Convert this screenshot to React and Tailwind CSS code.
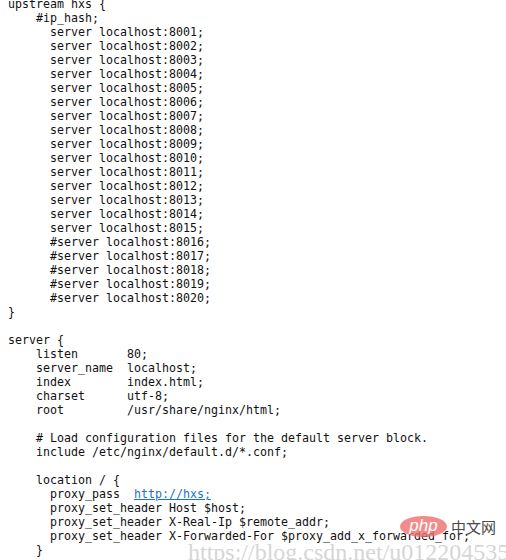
const servers = []
for (let i = 1; i <= 15; i++) servers.push(`      server localhost:80${String(i).padStart(2, "0")};`)
const disabled = []
for (let i = 16; i <= 20; i++) disabled.push(`      #server localhost:80${i};`)

const lines = [
    "upstream hxs {",
    "    #ip_hash;",
    ...servers,
    ...disabled,
    "}",
    "",
    "server {",
    "    listen       80;",
    "    server_name  localhost;",
    "    index        index.html;",
    "    charset      utf-8;",
    "    root         /usr/share/nginx/html;",
    "",
    "    # Load configuration files for the default server block.",
    "    include /etc/nginx/default.d/*.conf;",
    "",
    "    location / {",
    "LINK",
    "      proxy_set_header Host $host;",
    "      proxy_set_header X-Real-Ip $remote_addr;",
    "      proxy_set_header X-Forwarded-For $proxy_add_x_forwarded_for;",
    "    }",
]

const App = () => {
    return (
        <div className="relative w-[506px] h-[560px] overflow-hidden bg-white">
            <pre className="-mt-[3px] pl-2 text-[11.63px] leading-[14px] text-[#111] font-['DejaVu_Sans_Mono',monospace]">
                {lines.map((line, i) =>
                    line === "LINK" ? (
                        <div key={i}>
                            {"      proxy_pass  "}
                            <span className="text-[#1a6fd6] underline">http://hxs;</span>
                        </div>
                    ) : (
                        <div key={i}>{line || " "}</div>
                    )
                )}
            </pre>

            {/* php 中文网 watermark */}
            <div className="absolute left-[400px] top-[516px] flex items-center gap-[4px]">
                <div className="w-[47px] h-[21px] rounded-[50%] bg-[#ef6f6f]/80 flex items-center justify-center">
                    <span className="text-white italic text-[17px] leading-none font-['Liberation_Sans',sans-serif] -mt-[3px]">php</span>
                </div>
                <span className="text-[15px] leading-none text-[#4a4a4a] font-['Noto_Sans_CJK_SC',sans-serif]">中文网</span>
            </div>

            {/* csdn watermark */}
            <div className="absolute left-[188px] top-[540px] whitespace-nowrap text-[24px] leading-[24px] text-[#d6d6d6] font-['Liberation_Serif',serif]">
                https://blog.csdn.net/u012204535
            </div>
        </div>
    )
}

export default App
